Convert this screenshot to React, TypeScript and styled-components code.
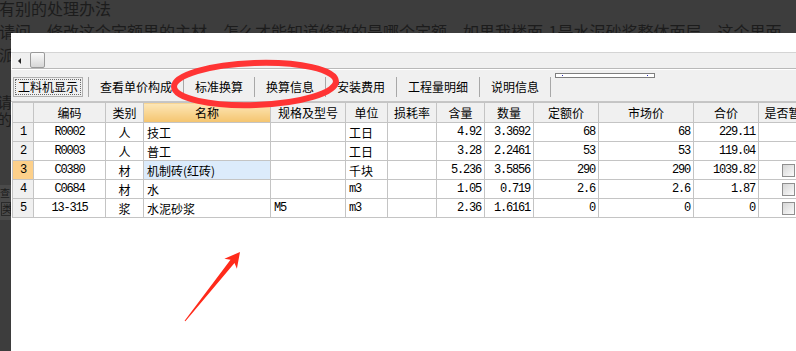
import React from "react";
import styled, { createGlobalStyle } from "styled-components";

const GlobalStyle = createGlobalStyle`
  html, body {
    margin: 0;
    padding: 0;
    background: #3d3d3d;
    overflow: hidden;
  }
`;

type Row = {
  no: number;
  code: string;
  kind: string;
  name: string;
  spec: string;
  unit: string;
  qty: string;
  amount: string;
  quota: string;
  market: string;
  total: string;
  check: boolean;
};

const rows: Row[] = [
  { no: 1, code: "R0002", kind: "人", name: "技工", spec: "", unit: "工日", qty: "4.92", amount: "3.3692", quota: "68", market: "68", total: "229.11", check: false },
  { no: 2, code: "R0003", kind: "人", name: "普工", spec: "", unit: "工日", qty: "3.28", amount: "2.2461", quota: "53", market: "53", total: "119.04", check: false },
  { no: 3, code: "C0380", kind: "材", name: "机制砖(红砖)", spec: "", unit: "千块", qty: "5.236", amount: "3.5856", quota: "290", market: "290", total: "1039.82", check: true },
  { no: 4, code: "C0684", kind: "材", name: "水", spec: "", unit: "m3", qty: "1.05", amount: "0.719", quota: "2.6", market: "2.6", total: "1.87", check: true },
  { no: 5, code: "13-315", kind: "浆", name: "水泥砂浆", spec: "M5", unit: "m3", qty: "2.36", amount: "1.6161", quota: "0", market: "0", total: "0", check: true },
];

const tabs = ["工料机显示", "查看单价构成", "标准换算", "换算信息", "安装费用", "工程量明细", "说明信息"];

const columns = [
  { label: "", width: 21 },
  { label: "编码", width: 72 },
  { label: "类别", width: 38 },
  { label: "名称", width: 127 },
  { label: "规格及型号", width: 75 },
  { label: "单位", width: 42 },
  { label: "损耗率", width: 49 },
  { label: "含量", width: 48 },
  { label: "数量", width: 49 },
  { label: "定额价", width: 65 },
  { label: "市场价", width: 95 },
  { label: "合价", width: 65 },
  { label: "是否暂估", width: 60 },
];

const isLatin = (s: string) => /^[\x00-\x7f]*$/.test(s);

const App: React.FC = (): JSX.Element => {
  return (
    <Page>
      <GlobalStyle />
      <BackContent>
        <BackLine style={{ marginTop: -3 }}>有别的处理办法</BackLine>
        <BackLine>请问，修改这个定额里的主材，怎么才能知道修改的是哪个定额，如果我楼面-1是水泥砂浆整体面层，这个里面</BackLine>
        <BackLine>派</BackLine>
        <BackSpacer />
        <BackSmall>请</BackSmall>
        <BackSmall>的</BackSmall>
        <BackMini>
          <span>查</span>
          <BackMiniCell>类</BackMiniCell>
        </BackMini>
      </BackContent>

      <Dialog>
        <TitleArea />
        <ScrollRow>
          <ScrollArrow />
          <ScrollThumb />
        </ScrollRow>
        <TabBar>
          {tabs.map((t, i) => (
            <Tab key={t} $active={i === 0}>
              <TabLabel $active={i === 0}>{t}</TabLabel>
            </Tab>
          ))}
          <MiniScroll>
            <MiniDot />
            <MiniDot />
          </MiniScroll>
        </TabBar>
        <Grid>
          <colgroup>
            {columns.map((c, i) => (
              <col key={i} style={{ width: c.width }} />
            ))}
          </colgroup>
          <thead>
            <tr>
              {columns.map((c, i) => (
                <Head key={i} $sorted={c.label === "名称"}>
                  {c.label}
                </Head>
              ))}
            </tr>
          </thead>
          <tbody>
            {rows.map((r) => {
              const cur = r.no === 3;
              return (
                <tr key={r.no}>
                  <RowHead $current={cur}>{r.no}</RowHead>
                  <Cell $align="center" $mono>{r.code}</Cell>
                  <Cell $align="center">{r.kind}</Cell>
                  <Cell $selected={cur}>{r.name}</Cell>
                  <Cell $mono>{r.spec}</Cell>
                  <Cell $mono={isLatin(r.unit)}>{r.unit}</Cell>
                  <Cell />
                  <Cell $align="right" $mono>{r.qty}</Cell>
                  <Cell $align="right" $mono>{r.amount}</Cell>
                  <Cell $align="right" $mono>{r.quota}</Cell>
                  <Cell $align="right" $mono>{r.market}</Cell>
                  <Cell $align="right" $mono>{r.total}</Cell>
                  <CheckCell>{r.check && <CheckBox />}</CheckCell>
                </tr>
              );
            })}
          </tbody>
        </Grid>
      </Dialog>

      <Marks width="796" height="351" viewBox="0 0 796 351">
        <ellipse
          cx="255"
          cy="84"
          rx="81"
          ry="21"
          transform="rotate(-2 255 84)"
          fill="none"
          stroke="#ff3434"
          strokeWidth="6"
        />
        <polygon
          points="240,252 236.9,268.7 234.5,263 185.4,321.3 184.6,320.7 230.5,259.8 224.4,258.7"
          fill="#ff2a1a"
        />
      </Marks>
    </Page>
  );
};

const Page = styled.div`
  position: relative;
  width: 796px;
  height: 351px;
  overflow: hidden;
  background: #3d3d3d;
  font-family: "Noto Sans CJK SC", "Noto Sans", sans-serif;
`;

const BackContent = styled.div`
  display: flex;
  flex-direction: column;
  color: #1c1c1c;
`;

const BackLine = styled.div`
  font-size: 16px;
  line-height: 23px;
  white-space: nowrap;
  margin-left: -1px;
`;

const BackSpacer = styled.div`
  height: 27px;
`;

const BackSmall = styled.div`
  font-size: 15px;
  line-height: 17px;
  margin-left: -3px;
`;

const BackMini = styled.div`
  margin-top: 58px;
  width: 60px;
  display: flex;
  flex-direction: column;
  gap: 3px;
  background: #4a4a4a;
  font-size: 10px;
  line-height: 12px;
  padding: 2px 0 4px;
`;

const BackMiniCell = styled.span`
  display: inline-block;
  width: 8px;
  border: 1px solid #2a2a2a;
  margin-left: 1px;
`;

const Dialog = styled.div`
  position: absolute;
  left: 11px;
  top: 33px;
  right: 0;
  bottom: 0;
  background: #fff;
  display: flex;
  flex-direction: column;
  overflow: hidden;
`;

const TitleArea = styled.div`
  height: 19px;
  border-bottom: 1px solid #d4d4d4;
`;

const ScrollRow = styled.div`
  height: 15px;
  background: #f0f0f0;
  border-bottom: 1px solid #b9b9b9;
  display: flex;
  align-items: center;
  margin-left: 1px;
`;

const ScrollArrow = styled.div`
  width: 0;
  height: 0;
  margin-left: 6px;
  border-top: 3px solid transparent;
  border-bottom: 3px solid transparent;
  border-right: 3px solid #222;
`;

const ScrollThumb = styled.div`
  width: 13px;
  height: 14px;
  margin-left: 9px;
  margin-top: -2px;
  border: 1px solid #9a9a9a;
  border-radius: 2px;
  background: linear-gradient(#fbfbfb, #d6d6d6);
`;

const TabBar = styled.div`
  height: 33px;
  box-sizing: border-box;
  background: #f0f0f0;
  border-top: 1px solid #fff;
  border-bottom: 1px solid #c6c6c6;
  display: flex;
  align-items: flex-end;
  padding: 0 0 4px 2px;
`;

const Tab = styled.div<{ $active: boolean }>`
  display: flex;
  align-items: center;
  height: 20px;
  padding: ${(p) => (p.$active ? "0 5px 0 0" : "0 10px")};
  border-right: 1px solid #a8a8a8;
`;

const TabLabel = styled.span<{ $active: boolean }>`
  font-size: 12px;
  line-height: 18px;
  color: #000;
  padding: ${(p) => (p.$active ? "0 4px" : "0 1px")};
  border: ${(p) => (p.$active ? "1px solid #b0b0b0" : "none")};
  outline: ${(p) => (p.$active ? "1px dotted #6a6a6a" : "none")};
  outline-offset: -3px;
`;

const MiniScroll = styled.div`
  align-self: flex-start;
  margin: 3px 0 0 4px;
  width: 86px;
  height: 3px;
  border: 1px solid #7e7e7e;
  background: #fff;
  display: flex;
  justify-content: space-between;
  padding: 0 6px;
`;

const MiniDot = styled.span`
  width: 1px;
  height: 1px;
  margin-top: 1px;
  background: #2a2ab0;
`;

const Grid = styled.table`
  table-layout: fixed;
  border-collapse: collapse;
  width: 806px;
  margin-left: 1px;
  font-size: 12px;
  color: #000;
`;

const Head = styled.th<{ $sorted: boolean }>`
  height: 19px;
  padding: 0;
  font-weight: normal;
  text-align: center;
  white-space: nowrap;
  overflow: hidden;
  border: 1px solid #c4c4c4;
  background: ${(p) =>
    p.$sorted ? "linear-gradient(#fde7b8, #f4c46e)" : "#f0f0f0"};
`;

const RowHead = styled.td<{ $current: boolean }>`
  height: 18px;
  padding: 0 0 0 7px;
  border: 1px solid #c4c4c4;
  background: ${(p) => (p.$current ? "#fdd08a" : "#f0f0f0")};
  font-family: "Liberation Mono", monospace;
  font-size: 12px;
`;

const Cell = styled.td<{ $align?: string; $mono?: boolean; $selected?: boolean }>`
  height: 18px;
  padding: 0 3px;
  border: 1px solid #c4c4c4;
  text-align: ${(p) => p.$align || "left"};
  white-space: nowrap;
  overflow: hidden;
  background: ${(p) => (p.$selected ? "#dcebfb" : "#fff")};
  font-family: ${(p) =>
    p.$mono ? `"Liberation Mono", monospace` : `"Noto Sans CJK SC", sans-serif`};
  font-size: 12px;
  letter-spacing: ${(p) => (p.$mono ? "-1.2px" : "0")};
`;

const CheckCell = styled.td`
  height: 18px;
  padding: 0 0 0 23px;
  border: 1px solid #c4c4c4;
  background: #fff;
  line-height: 0;
`;

const CheckBox = styled.span`
  display: inline-block;
  width: 11px;
  height: 11px;
  border: 1px solid #8f8f8f;
  background: linear-gradient(135deg, #d6d6d6, #fbfbfb);
`;

const Marks = styled.svg`
  position: absolute;
  left: 0;
  top: 0;
  pointer-events: none;
`;

export default App;
